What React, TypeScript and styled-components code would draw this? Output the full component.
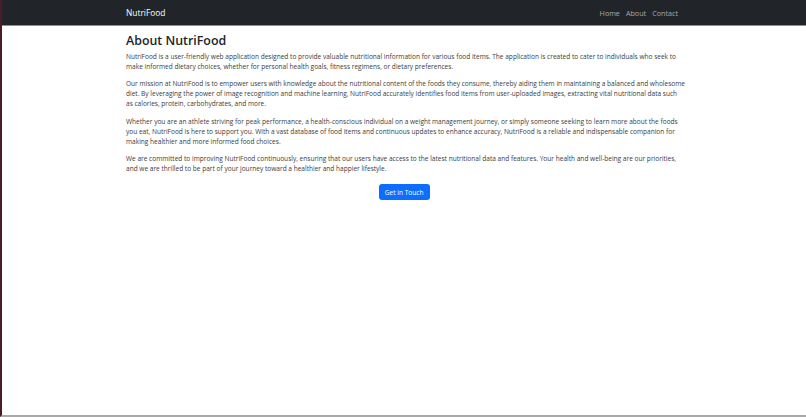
import React, { FC } from "react";
import styled, { createGlobalStyle } from "styled-components";

const GlobalStyle = createGlobalStyle`
  html, body {
    margin: 0;
    padding: 0;
    background: #ffffff;
  }
  * {
    box-sizing: border-box;
  }
`;

const Frame = styled.div`
  height: 417px;
  width: 806px;
  border-left: 2px solid #4a1c26;
  border-bottom: 2px solid #a9a9a9;
  font-family: "Open Sans", "Noto Sans", sans-serif;
  color: #3a3d41;
  display: flex;
  flex-direction: column;
  overflow: hidden;
`;

const NavBar = styled.nav`
  height: 26px;
  flex-shrink: 0;
  background: #212529;
  border-bottom: 1px solid #8c8f93;
`;

const NavInner = styled.div`
  width: 556px;
  height: 100%;
  margin-left: 124px;
  padding-right: 4px;
  display: flex;
  align-items: center;
  justify-content: space-between;
`;

const Brand = styled.a`
  color: #ffffff;
  font-size: 8.4px;
  text-decoration: none;
  padding-bottom: 1px;
`;

const NavLinks = styled.ul`
  list-style: none;
  margin: 0;
  padding: 0;
  display: flex;
  gap: 6px;
`;

const NavLink = styled.li`
  color: rgba(255, 255, 255, 0.6);
  font-size: 7.2px;
`;

const Main = styled.main`
  width: 559.3px;
  margin-left: 124px;
  padding-top: 7px;
  display: flex;
  flex-direction: column;
`;

const Heading = styled.h1`
  font-size: 12.4px;
  font-weight: 600;
  color: #212529;
  margin: 0 0 3px 0;
  line-height: 16px;
`;

const Para = styled.p`
  font-size: 6.56px;
  line-height: 10px;
  margin: 0 0 7.3px 0;
`;

const ButtonRow = styled.div`
  display: flex;
  justify-content: center;
  padding-top: 3px;
  padding-right: 3px;
`;

const Button = styled.button`
  background: #0d6efd;
  color: #ffffff;
  border: none;
  border-radius: 3px;
  font-family: inherit;
  font-size: 6.6px;
  height: 16px;
  padding: 0 6px;
`;

const App: FC = () => {
  return (
    <>
      <GlobalStyle />
      <Frame>
        <NavBar>
          <NavInner>
            <Brand href="#">NutriFood</Brand>
            <NavLinks>
              <NavLink>Home</NavLink>
              <NavLink>About</NavLink>
              <NavLink>Contact</NavLink>
            </NavLinks>
          </NavInner>
        </NavBar>
        <Main>
          <Heading>About NutriFood</Heading>
          <Para>
            NutriFood is a user-friendly web application designed to provide
            valuable nutritional information for various food items. The
            application is created to cater to individuals who seek to make
            informed dietary choices, whether for personal health goals, fitness
            regimens, or dietary preferences.
          </Para>
          <Para>
            Our mission at NutriFood is to empower users with knowledge about
            the nutritional content of the foods they consume, thereby aiding
            them in maintaining a balanced and wholesome diet. By leveraging the
            power of image recognition and machine learning, NutriFood
            accurately identifies food items from user-uploaded images,
            extracting vital nutritional data such as calories, protein,
            carbohydrates, and more.
          </Para>
          <Para>
            Whether you are an athlete striving for peak performance, a
            health-conscious individual on a weight management journey, or
            simply someone seeking to learn more about the foods you eat,
            NutriFood is here to support you. With a vast database of food items
            and continuous updates to enhance accuracy, NutriFood is a reliable
            and indispensable companion for making healthier and more informed
            food choices.
          </Para>
          <Para>
            We are committed to improving NutriFood continuously, ensuring that
            our users have access to the latest nutritional data and features.
            Your health and well-being are our priorities, and we are thrilled
            to be part of your journey toward a healthier and happier lifestyle.
          </Para>
          <ButtonRow>
            <Button>Get in Touch</Button>
          </ButtonRow>
        </Main>
      </Frame>
    </>
  );
};

export default App;
